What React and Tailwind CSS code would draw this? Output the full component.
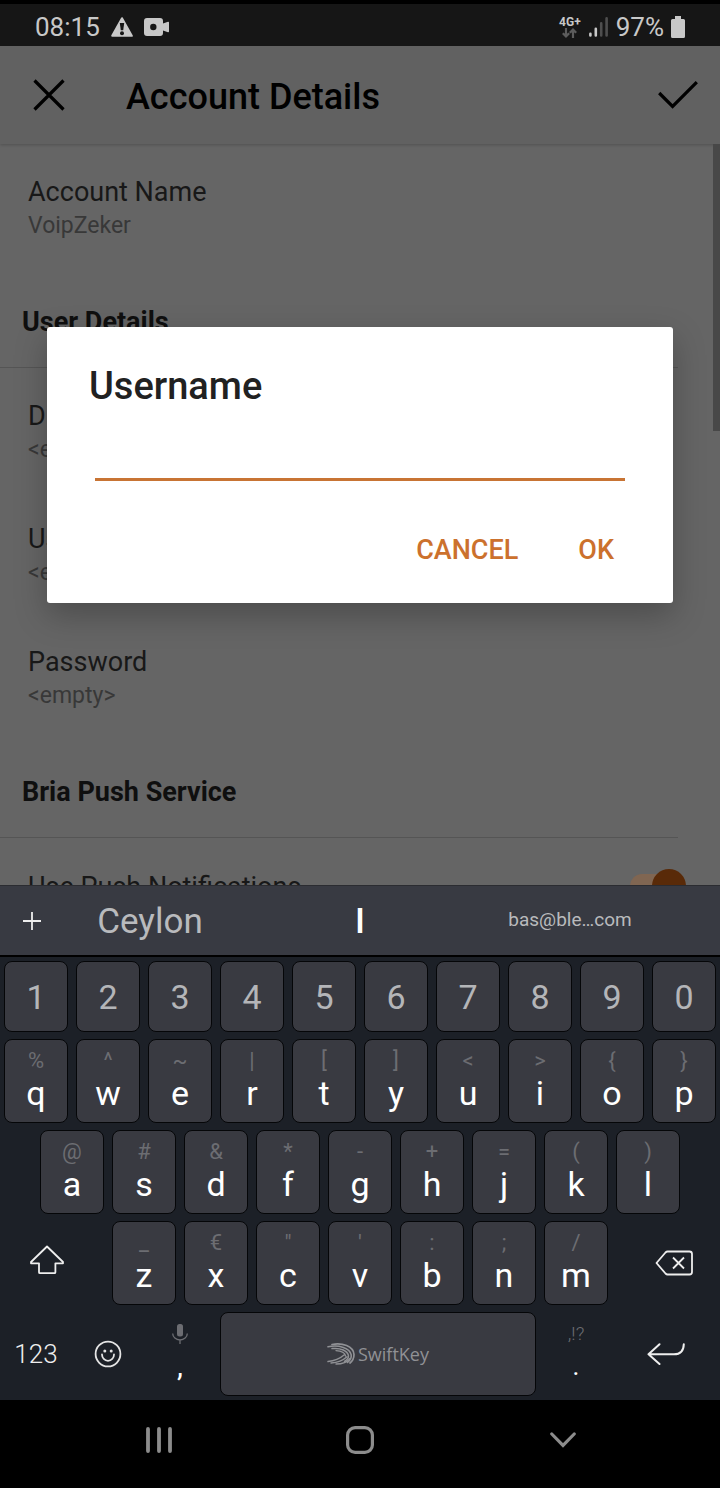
import { useState } from "react";

const NUMBER_KEYS = ["1", "2", "3", "4", "5", "6", "7", "8", "9", "0"];

const TOP_KEYS = [
  ["q", "%"],
  ["w", "^"],
  ["e", "~"],
  ["r", "|"],
  ["t", "["],
  ["y", "]"],
  ["u", "<"],
  ["i", ">"],
  ["o", "{"],
  ["p", "}"],
];

const HOME_KEYS = [
  ["a", "@"],
  ["s", "#"],
  ["d", "&"],
  ["f", "*"],
  ["g", "-"],
  ["h", "+"],
  ["j", "="],
  ["k", "("],
  ["l", ")"],
];

const BOTTOM_KEYS = [
  ["z", "_"],
  ["x", "€"],
  ["c", '"'],
  ["v", "'"],
  ["b", ":"],
  ["n", ";"],
  ["m", "/"],
];

/* =======================
   STATUS BAR
   ======================= */
function StatusBar() {
  return (
    <div className="flex h-[46px] shrink-0 items-center justify-between border-t-4 border-black bg-[#161616] pl-[35px] pr-[35px] pt-[3px] text-[#c8c8c8]">
      <div className="flex items-center gap-[11px]">
        <span className="text-[26px] leading-8">08:15</span>
        <svg width="22" height="20" viewBox="0 0 22 20" aria-hidden="true">
          <path d="M11 1.2 20.8 18.8H1.2Z" fill="#c8c8c8" stroke="#c8c8c8" strokeWidth="2" strokeLinejoin="round" />
          <path d="M8.800 6h4.400l-1 7.200H9.800Z" fill="#161616" />
          <circle cx="11" cy="16.200" r="2" fill="#161616" />
        </svg>
        <svg width="25" height="18" viewBox="0 0 25 18" aria-hidden="true">
          <path
            d="M3 0h13q3 0 3 3v2.6l5-1.8q1-.3 1 .8v8.800q0 1-1 .8l-5-1.800V15q0 3-3 3H3q-3 0-3-3V3q0-3 3-3Z"
            fill="#c8c8c8"
          />
          <circle cx="9.300" cy="9" r="3.200" fill="#161616" />
        </svg>
      </div>

      <div className="flex items-center gap-2">
        <div className="flex flex-col items-center">
          <span className="text-xs font-bold leading-3">4G+</span>
          <svg width="15" height="10" viewBox="0 0 15 10" fill="none" stroke="#5c5c5c" strokeWidth="2.200" aria-hidden="true">
            <path d="M4 0v8M.8 5.200 4 8.400l3.200-3.200M11 10V2M7.800 4.800 11 1.600l3.200 3.200" />
          </svg>
        </div>
        <svg width="19" height="20" viewBox="0 0 19 20" strokeWidth="2.600" strokeLinecap="round" aria-hidden="true">
          <path d="M1.400 16.800v1.600M6.800 11.800v6.600" stroke="#c8c8c8" />
          <path d="M12.200 6.400v12M17.600 1.400v17" stroke="#4e4e4e" />
        </svg>
        <div className="flex items-center gap-[7px]">
          <span className="text-[26px] leading-8">97%</span>
          <svg width="14" height="22" viewBox="0 0 14 22" fill="#c8c8c8" aria-hidden="true">
            <path d="M4 0h6v3h2.500q1.500 0 1.500 1.500v16q0 1.500-1.500 1.500h-11Q0 22 0 20.500v-16Q0 3 1.500 3H4Z" />
          </svg>
        </div>
      </div>
    </div>
  );
}

/* =======================
   ACCOUNT DETAILS PAGE
   ======================= */
function SettingItem({ title, value }) {
  return (
    <div className="px-7 pb-[24px] pt-[31px]">
      <div className="text-[27px] leading-[34px] text-[#181818]">{title}</div>
      <div className="text-[23px] leading-[34px] text-[#383838]">{value}</div>
    </div>
  );
}

function SectionTitle({ children }) {
  return (
    <h2 className="mr-[42px] h-[101px] border-b border-[#555] pl-[22px] pt-[38px] text-[27px] font-bold leading-[34px] text-[#0f0f0f]">
      {children}
    </h2>
  );
}

function AccountDetails() {
  return (
    <div className="flex h-full flex-col bg-[#656565]">
      <header className="flex h-[98px] shrink-0 items-center bg-[#616161] pl-8 pr-[22px] shadow-[0_1px_3px_rgba(0,0,0,0.2)]">
        <button type="button" aria-label="Close">
          <svg width="34" height="34" viewBox="0 0 34 34" fill="none" stroke="#000" strokeWidth="3.200">
            <path d="M2.500 2.500 31.500 31.500M31.500 2.500 2.500 31.500" />
          </svg>
        </button>
        <h1 className="ml-[60px] flex-1 pt-1 text-[36px] font-medium leading-10 text-black">Account Details</h1>
        <button type="button" aria-label="Save">
          <svg width="40" height="28" viewBox="0 0 40 28" fill="none" stroke="#000" strokeWidth="3.200">
            <path d="M1.200 12 14.600 25.400 38.800 1.200" />
          </svg>
        </button>
      </header>

      <div className="relative min-h-0 flex-1 overflow-hidden">
        <SettingItem title="Account Name" value="VoipZeker" />
        <SectionTitle>User Details</SectionTitle>
        <SettingItem title="Display as" value="<empty>" />
        <SettingItem title="Username" value="<empty>" />
        <SettingItem title="Password" value="<empty>" />
        <SectionTitle>Bria Push Service</SectionTitle>
        <label className="flex items-center justify-between pb-7 pl-7 pr-[34px] pt-[31px] text-[27px] leading-[34px] text-[#181818]">
          Use Push Notifications
          <input
            type="checkbox"
            defaultChecked
            className="relative h-[36px] w-14 appearance-none before:absolute before:left-0 before:top-[5px] before:h-6 before:w-12 before:rounded-full before:bg-[#806652] after:absolute after:right-0 after:top-0 after:size-[34px] after:rounded-full after:bg-[#592a08]"
          />
        </label>
        {/* scroll thumb */}
        <div className="absolute right-0 top-0 h-[287px] w-[7px] bg-[#484848]" />
      </div>
    </div>
  );
}

function UsernameDialog() {
  const [username, setUsername] = useState("");

  return (
    <div className="absolute inset-0 flex items-center px-[47px] pb-[2px]">
      <form
        role="dialog"
        className="w-full rounded-[3px] bg-white pb-[28px] pt-9 shadow-[0_12px_32px_rgba(0,0,0,0.25)]"
        onSubmit={(e) => e.preventDefault()}
      >
        <label htmlFor="username" className="block px-[42px] text-[38px] font-medium leading-[46px] text-[#212121]">
          Username
        </label>
        <div className="mt-2 px-12">
          <input
            id="username"
            type="text"
            value={username}
            onChange={(e) => setUsername(e.target.value)}
            className="block h-16 w-full border-b-[3px] border-[#c87434] text-[32px] text-[#212121] outline-none"
          />
        </div>
        <div className="mt-[46px] flex justify-end pr-[29px] text-[27px] font-medium text-[#cc712d]">
          <button type="button" className="h-12 px-[30px]">CANCEL</button>
          <button type="submit" className="h-12 px-[30px]">OK</button>
        </div>
      </form>
    </div>
  );
}

/* =======================
   KEYBOARD
   ======================= */
function LetterKey({ letter, hint }) {
  return (
    <button
      type="button"
      className="col-span-2 mx-1 flex h-[84px] flex-col items-center rounded-lg border border-[#050608] bg-[#393a41] pt-[7px]"
    >
      <span className="h-7 text-[22px] leading-7 text-[#6c6d72]">{hint}</span>
      <span className="h-9 text-[34px] leading-9 text-white">{letter}</span>
    </button>
  );
}

function SuggestionBar() {
  return (
    <div className="grid h-[72px] grid-cols-[60px_3fr_4fr_3fr_60px] border-b-2 border-t border-b-black border-t-[#2b2c31] bg-[#383a42] text-[#b9babd]">
      <button type="button" aria-label="Open toolbar" className="flex items-center justify-center pl-1">
        <svg width="18" height="18" viewBox="0 0 18 18" stroke="#eee" strokeWidth="1.800">
          <path d="M9 0v18M0 9h18" />
        </svg>
      </button>
      <button type="button" className="pt-[3px] text-[35px]">Ceylon</button>
      <button type="button" className="pt-[3px] text-[35px] font-medium text-white">I</button>
      <button type="button" className="text-[19px]">bas@ble…com</button>
    </div>
  );
}

function SwiftKeyLogo() {
  return (
    <svg width="28" height="22" viewBox="0 0 28 22" fill="none" stroke="#909195" strokeLinecap="round" aria-hidden="true">
      <path d="M5 1.500C15-.5 26.500 3 27 11.500 27 15 25.500 18 23 20" strokeWidth="1.700" />
      <path d="M1 3.800C12 1.500 23 5 24.200 11.800 24.600 15 23 17.500 20.500 19.500" strokeWidth="1.600" />
      <path d="M5 5.600C14 4.600 20.500 8 21.400 12.400 21.800 15 20 17 17.500 18.500" strokeWidth="1.500" />
      <path d="M9 7.600C14 7.800 18 10 18.600 13" strokeWidth="1.300" />
      <path d="M1 18.600C7 18 13 15.500 17.400 11.800" strokeWidth="1.500" />
      <path d="M4 20C10 19.600 16 17.500 20 13.800" strokeWidth="1.400" />
      <path d="M9 21C14 21 20 19.500 23 15.500" strokeWidth="1.400" />
    </svg>
  );
}

function Keyboard() {
  return (
    <div className="shrink-0 bg-[#1c2027]">
      <SuggestionBar />

      <div className="flex flex-col gap-[7px] pb-1 pt-1">
        {/* NUMBERS */}
        <div className="grid grid-cols-20">
          {NUMBER_KEYS.map((n) => (
            <button
              key={n}
              type="button"
              className="col-span-2 mx-1 h-[71px] rounded-lg border border-[#050608] bg-[#393a41] pt-[2px] text-[34px] text-[#b4b5b8]"
            >
              {n}
            </button>
          ))}
        </div>

        {/* LETTERS */}
        <div className="grid grid-cols-20">
          {TOP_KEYS.map(([letter, hint]) => (
            <LetterKey key={letter} letter={letter} hint={hint} />
          ))}
        </div>
        <div className="grid grid-cols-20">
          <div />
          {HOME_KEYS.map(([letter, hint]) => (
            <LetterKey key={letter} letter={letter} hint={hint} />
          ))}
        </div>
        <div className="grid grid-cols-20">
          <button type="button" aria-label="Shift" className="col-span-3 flex items-center justify-center pr-[14px]">
            <svg width="36" height="36" viewBox="0 0 36 36" fill="none" stroke="#eee" strokeWidth="1.800" strokeLinejoin="round">
              <path d="M18 1.500 34 17v1.300h-7.600v8.900q0 1-1 1H11q-1 0-1-1v-8.900H2V17Z" />
            </svg>
          </button>
          {BOTTOM_KEYS.map(([letter, hint]) => (
            <LetterKey key={letter} letter={letter} hint={hint} />
          ))}
          <button type="button" aria-label="Backspace" className="col-span-3 flex items-center justify-center pl-4">
            <svg width="38" height="26" viewBox="0 0 38 26" fill="none" stroke="#eee" strokeWidth="1.800" strokeLinejoin="round">
              <path d="M12.500 1.500H34.500q2.500 0 2.500 2.500v18q0 2.500-2.500 2.500H12.500Q11.500 24.500 10.500 23.500L1.500 13 10.500 2.500Q11.500 1.500 12.500 1.500Z" />
              <path d="M18 7.500 29 18.500M29 7.500 18 18.500" />
            </svg>
          </button>
        </div>

        {/* SPACE ROW */}
        <div className="grid grid-cols-20">
          <button type="button" className="col-span-2 text-[26px] font-light text-[#eee]">123</button>
          <button type="button" aria-label="Emoji" className="col-span-2 flex items-center justify-center">
            <svg width="28" height="28" viewBox="0 0 28 28" fill="none" stroke="#e4e4e4" strokeWidth="1.800">
              <circle cx="14" cy="14" r="12.400" />
              <path d="M8 14.500a6 6.300 0 0 0 12 0" strokeLinecap="round" />
              <circle cx="10.800" cy="11" r="1.500" fill="#e4e4e4" stroke="none" />
              <circle cx="17.200" cy="11" r="1.500" fill="#e4e4e4" stroke="none" />
            </svg>
          </button>
          <button type="button" className="col-span-2 flex h-[84px] flex-col items-center pt-2">
            <span className="flex h-7 items-center">
              <svg width="16" height="20" viewBox="0 0 16 20" aria-label="Voice input">
                <rect x="5" y="0" width="6" height="12.400" rx="2.500" fill="#6c6d72" />
                <path d="M.7 9.500a7.300 6.500 0 0 0 14.600 0M8 16v4" fill="none" stroke="#6c6d72" strokeWidth="1.300" />
              </svg>
            </span>
            <span className="h-9 text-[30px] leading-9 text-white">,</span>
          </button>
          <button
            type="button"
            className="col-span-9 mx-1 flex items-center justify-center gap-[3px] rounded-lg border border-[#050608] bg-[#393a41] font-['Open_Sans',sans-serif] text-lg text-[#909195]"
          >
            <SwiftKeyLogo />
            SwiftKey
          </button>
          <button type="button" className="col-span-2 flex h-[84px] flex-col items-center pt-2">
            <span className="h-7 text-[19px] font-light leading-7 text-[#6c6d72]">,!?</span>
            <span className="h-9 text-[26px] leading-9 text-white">.</span>
          </button>
          <button type="button" aria-label="Enter" className="col-span-3 flex items-center justify-center">
            <svg width="38" height="22" viewBox="0 0 38 22" fill="none" stroke="#eee" strokeWidth="2" strokeLinecap="round" strokeLinejoin="round">
              <path d="M12.500 1.200 1.500 11.300 12.500 21M1.500 11.300H27Q36.500 11.300 36.800 1.200" />
            </svg>
          </button>
        </div>
      </div>
    </div>
  );
}

/* =======================
   NAVIGATION BAR
   ======================= */
function NavigationBar() {
  return (
    <nav className="grid h-[88px] shrink-0 grid-cols-3 bg-black px-14 pb-2 text-[#8c8c8c]">
      <button type="button" aria-label="Recent apps" className="flex items-center justify-center pl-1">
        <svg width="26" height="26" viewBox="0 0 26 26" stroke="currentColor" strokeWidth="3.800" strokeLinecap="round">
          <path d="M2 2v22M13 2v22M24 2v22" />
        </svg>
      </button>
      <button type="button" aria-label="Home" className="flex items-center justify-center">
        <svg width="28" height="28" viewBox="0 0 28 28" fill="none" stroke="currentColor" strokeWidth="3.200">
          <rect x="1.600" y="1.600" width="24.800" height="24.800" rx="7.500" />
        </svg>
      </button>
      <button type="button" aria-label="Hide keyboard" className="flex items-center justify-center">
        <svg width="26" height="16" viewBox="0 0 26 16" fill="none" stroke="currentColor" strokeWidth="3.200" strokeLinecap="round">
          <path d="M1.800 2 13 13.400 24.200 2" />
        </svg>
      </button>
    </nav>
  );
}

export default function App() {
  return (
    <div className="flex h-screen flex-col overflow-hidden bg-black font-[Roboto,sans-serif]">
      <StatusBar />
      <main className="relative min-h-0 flex-1 overflow-hidden">
        <AccountDetails />
        <UsernameDialog />
      </main>
      <Keyboard />
      <NavigationBar />
    </div>
  );
}
